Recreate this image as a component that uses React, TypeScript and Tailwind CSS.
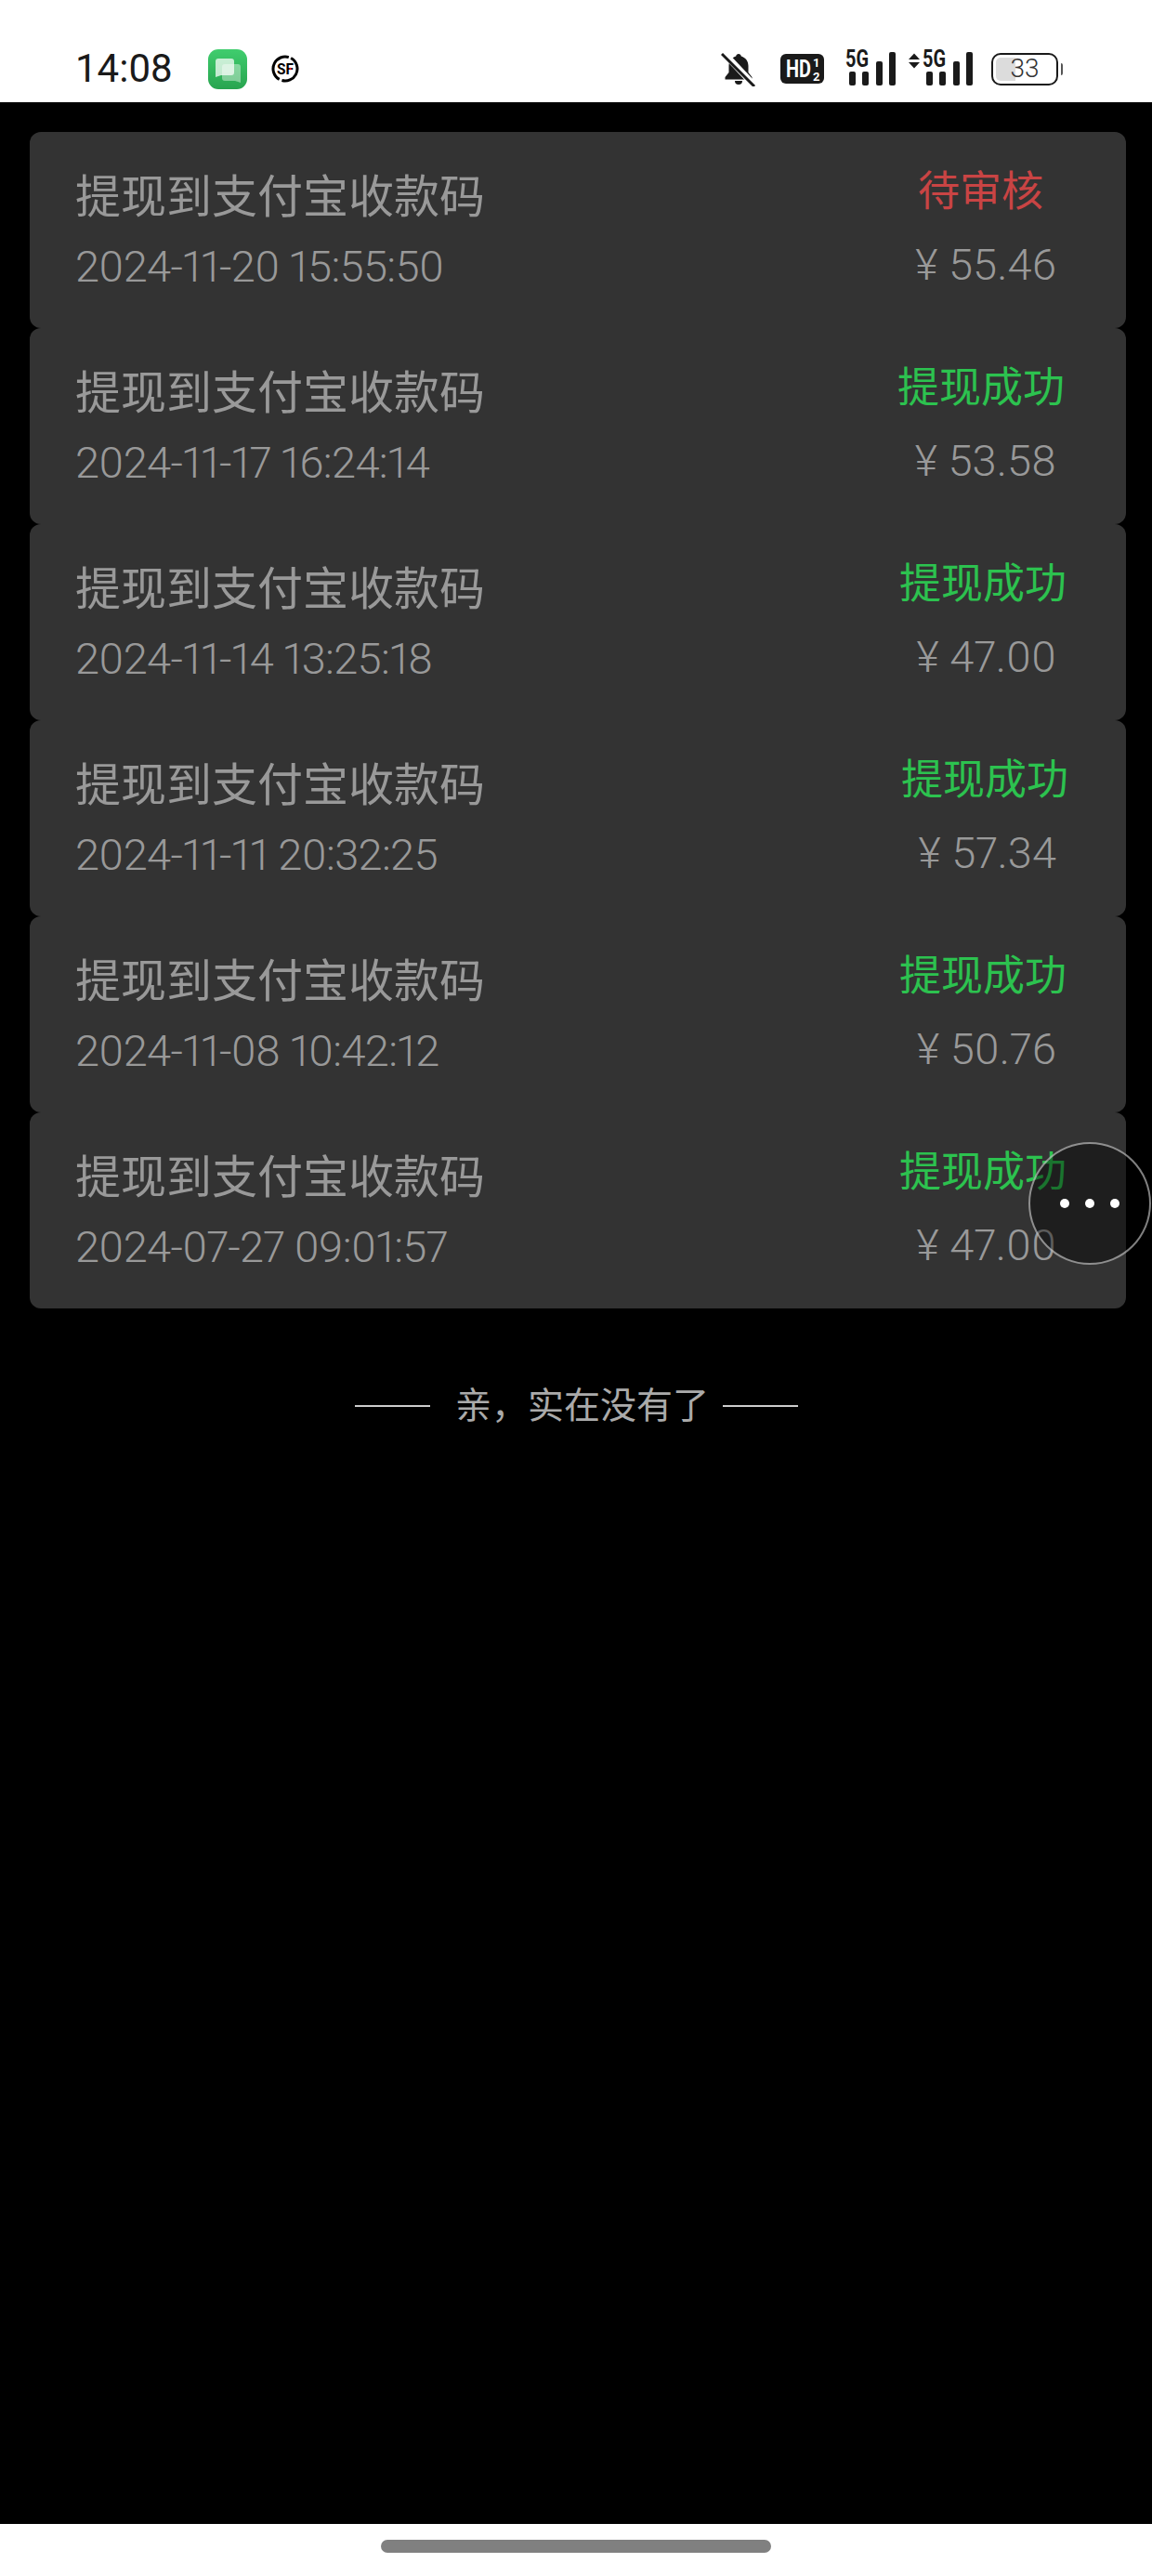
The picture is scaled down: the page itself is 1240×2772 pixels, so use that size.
import { Fragment } from 'react'

const cjk = 'font-["Roboto","Noto_Sans_CJK_SC",sans-serif]'

const registros = [
  { data: '2024-11-20 15:55:50', status: '待审核', valor: '55.46', cor: 'text-[#c94444]', recuo: 'pr-[89px]' },
  { data: '2024-11-17 16:24:14', status: '提现成功', valor: '53.58', cor: 'text-[#2cc24f]', recuo: 'pr-[66px]' },
  { data: '2024-11-14 13:25:18', status: '提现成功', valor: '47.00', cor: 'text-[#2cc24f]', recuo: 'pr-[64px]' },
  { data: '2024-11-11 20:32:25', status: '提现成功', valor: '57.34', cor: 'text-[#2cc24f]', recuo: 'pr-[62px]' },
  { data: '2024-11-08 10:42:12', status: '提现成功', valor: '50.76', cor: 'text-[#2cc24f]', recuo: 'pr-[64px]' },
  { data: '2024-07-27 09:01:57', status: '提现成功', valor: '47.00', cor: 'text-[#2cc24f]', recuo: 'pr-[64px]' },
]

function Sinal({ setas }: { setas?: boolean }) {
  return (
    <svg width={setas ? 69 : 54} height="52" viewBox={setas ? '0 -6 69 52' : '15 -6 54 52'} className="block">
      {setas && (
        <>
          <path d="M0 10 L6 3.500 L12 10 Z" fill="#1a1a1a" />
          <path d="M0 13 L12 13 L6 19.500 Z" fill="#1a1a1a" />
        </>
      )}
      <text x="15" y="18" fontFamily="Roboto" fontWeight="700" fontSize="25" fill="#1a1a1a" textLength="25" lengthAdjust="spacingAndGlyphs">5G</text>
      <rect x="19" y="23" width="7" height="15" rx="2" fill="#1a1a1a" />
      <rect x="33" y="23" width="7" height="15" rx="2" fill="#1a1a1a" />
      <rect x="48" y="12" width="7" height="26" rx="2" fill="#1a1a1a" />
      <rect x="62" y="2" width="7" height="36" rx="2" fill="#1a1a1a" />
    </svg>
  )
}

function BarraStatus() {
  return (
    <header className="flex h-[110px] items-center justify-between bg-white pl-[81px] pr-[96px] pt-[38px]">
      <div className="flex items-center">
        <span className='w-[143px] font-["Roboto",sans-serif] text-[42px] leading-[42px] text-[#1a1a1a]'>14:08</span>
        <svg width="42" height="43" viewBox="0 0 42 43">
          <defs>
            <linearGradient id="verde" x1="0" y1="0" x2="0" y2="1">
              <stop offset="0" stopColor="#40cd6e" />
              <stop offset="1" stopColor="#28a44f" />
            </linearGradient>
          </defs>
          <rect width="42" height="43" rx="11" fill="url(#verde)" />
          <path d="M11 10h14a3 3 0 0 1 3 3v12a3 3 0 0 1-3 3H14l-6 2V13a3 3 0 0 1 3-3z" fill="#fff" fillOpacity="0.72" />
          <path d="M18 16h14a3 3 0 0 1 3 3v17l-6-2H18a3 3 0 0 1-3-3V19a3 3 0 0 1 3-3z" fill="#fff" fillOpacity="0.4" />
        </svg>
        <svg width="30" height="30" viewBox="0 0 30 30" className="ml-[26px]">
          <g transform="rotate(-62 15 15)">
            <circle cx="15" cy="15" r="13" fill="none" stroke="#000" strokeWidth="3" strokeDasharray="37.800 3" />
          </g>
          <text x="6" y="21" fontFamily="Roboto" fontWeight="700" fontSize="17" fill="#000" textLength="18" lengthAdjust="spacingAndGlyphs">SF</text>
          <circle cx="20.500" cy="15" r="1.300" fill="#e02020" />
        </svg>
      </div>
      <div className="flex items-center">
        <svg width="38" height="38" viewBox="0 0 38 38">
          <path d="M19 3c1.500 0 2.600 1 2.800 2.400C27 7 29.500 11 29.500 16v7l4 5v2.500h-29V28l4-5v-7c0-5 2.500-9 7.700-10.600C16.400 4 17.500 3 19 3z" fill="#1a1a1a" />
          <path d="M15 32h8a4 4 0 0 1-8 0z" fill="#1a1a1a" />
          <path d="M2 1 L36 37" stroke="#fff" strokeWidth="7" />
          <path d="M1 3 L36 38" stroke="#1a1a1a" strokeWidth="3" />
        </svg>
        <svg width="47" height="32" viewBox="0 0 47 32" className="ml-[26px]">
          <rect width="47" height="32" rx="6" fill="#1a1a1a" />
          <text x="6" y="25" fontFamily="Roboto" fontWeight="700" fontSize="26" fill="#fff" textLength="27" lengthAdjust="spacingAndGlyphs">HD</text>
          <text x="35" y="13.500" fontFamily="Roboto" fontWeight="700" fontSize="13" fill="#fff">1</text>
          <text x="35" y="29" fontFamily="Roboto" fontWeight="700" fontSize="13" fill="#fff">2</text>
        </svg>
        <span className="ml-[23px]"><Sinal /></span>
        <span className="ml-[14px]"><Sinal setas /></span>
        <span className="relative ml-[20px] flex h-[35px] w-[72px] overflow-hidden rounded-[10px] border-[2.500px] border-[#1a1a1a] p-[3px]">
          <span className="h-full w-[21px] rounded-l-[5px] bg-[#dcdcdc]" />
          <span className='absolute inset-0 flex items-center justify-center font-["Roboto",sans-serif] text-[28px] font-light leading-none text-[#333]'>33</span>
        </span>
        <span className="ml-[3px] h-[13px] w-[2px] rounded-r-sm bg-[#555]" />
      </div>
    </header>
  )
}

function Cartao({ r }: { r: (typeof registros)[number] }) {
  return (
    <div className={`flex h-[211px] justify-between rounded-[12px] bg-[#333333] text-[#999999] ${cjk}`}>
      <div className="pl-[49px] pt-[39px]">
        <p className="text-[49px] leading-[64px]">提现到支付宝收款码</p>
        <p className="mt-[15px] text-[47px] font-light leading-[54px] tracking-[-0.7px] proportional-nums">{r.data}</p>
      </div>
      <div className="flex flex-col items-end pt-[35px]">
        <p className={`text-[45px] leading-[60px] ${r.cor} ${r.recuo}`}>{r.status}</p>
        <p className="mt-[21px] pr-[75px] text-[47px] font-light leading-[54px] proportional-nums">¥ {r.valor}</p>
      </div>
    </div>
  )
}

export default function App() {
  return (
    <div className="relative flex h-[2772px] w-[1240px] flex-col overflow-hidden bg-black">
      <BarraStatus />
      <main className="flex-1 pl-[32px] pr-[28px] pt-[32px]">
        {registros.map((r) => (
          <Fragment key={r.data}>
            <Cartao r={r} />
          </Fragment>
        ))}
        <div className={`mt-[78px] flex items-center justify-center pr-[3px] text-[39px] leading-[54px] text-[#aaaaaa] ${cjk}`}>
          <span className="h-[2px] w-[81px] bg-[#cccccc]" />
          <span className="ml-[27px] mr-[15px]">亲，实在没有了</span>
          <span className="h-[2px] w-[81px] bg-[#cccccc]" />
        </div>
      </main>
      <footer className="flex h-[56px] items-start justify-center bg-white pt-[17px]">
        <div className="h-[14px] w-[420px] rounded-full bg-[#808080]" />
      </footer>
      <button className="absolute left-[1107px] top-[1229px] flex h-[132px] w-[132px] items-center justify-center gap-[17px] rounded-full border-2 border-white/50 bg-black/40">
        <span className="h-[10px] w-[10px] rounded-full bg-white" />
        <span className="h-[10px] w-[10px] rounded-full bg-white" />
        <span className="h-[10px] w-[10px] rounded-full bg-white" />
      </button>
    </div>
  )
}
